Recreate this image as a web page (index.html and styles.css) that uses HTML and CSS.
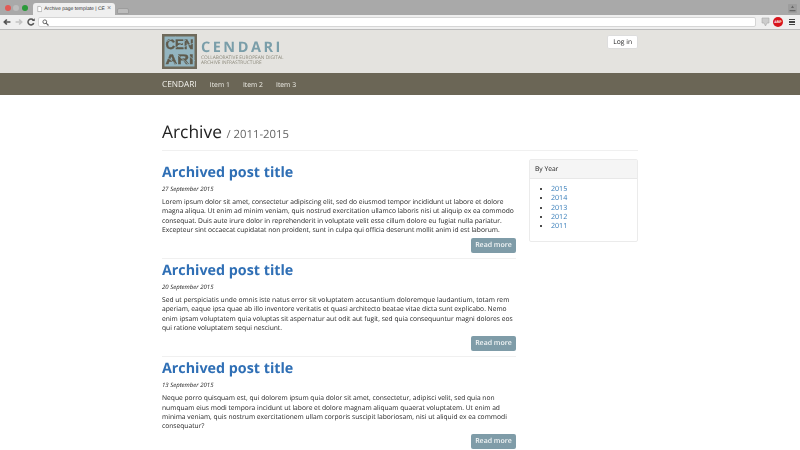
FILE: index.html
```html
<!DOCTYPE html>
<html lang="en">
<head>
<meta charset="utf-8">
<title>Archive page template</title>
<link rel="stylesheet" href="styles.css">
</head>
<body>
<div class="tabstrip">
  <div class="lights"><i class="light red"></i><i class="light grey"></i><i class="light green"></i></div>
  <div class="tab">
    <svg class="tab-doc" width="7" height="8" viewBox="0 0 7 8"><path d="M1 .5h3.500L6.500 2.500V7.500H1z" fill="#fff" stroke="#888" stroke-width=".7"/></svg>
    <span class="tab-title">Archive page template | CE</span>
    <span class="tab-close">×</span>
  </div>
  <div class="newtab"></div>
  <div class="strip-space"></div>
  <div class="profile"><svg width="7" height="7" viewBox="0 0 7 7"><path d="M3.500 .5 5 3H2zM.5 5h6v1.200h-6z" fill="#666"/></svg></div>
</div>
<div class="toolbar">
  <svg class="nav-icon" width="10" height="10" viewBox="-2 -2 14 14"><path d="M.8 5h9M4.800 1.500 1.300 5 4.800 8.500" fill="none" stroke="#555" stroke-width="2.400"/></svg>
  <svg class="nav-icon" width="10" height="10" viewBox="-2 -2 14 14"><path d="M.2 5h9M5.200 1.500 8.700 5 5.200 8.500" fill="none" stroke="#c4c4c4" stroke-width="2.400"/></svg>
  <svg class="nav-icon" width="10" height="10" viewBox="-1 -1 12 12"><path d="M8.300 6.300A3.600 3.600 0 1 1 7.800 2.600" fill="none" stroke="#555" stroke-width="1.800"/><path d="M6 3.800h3.500V.4z" fill="#555"/></svg>
  <div class="omnibox"><svg width="7" height="7" viewBox="0 0 7 7"><circle cx="2.800" cy="2.800" r="1.900" fill="none" stroke="#666"/><path d="M4.200 4.200 6.500 6.500" stroke="#666" stroke-width="1.200"/></svg></div>
  <svg class="ext-tag" width="9" height="10" viewBox="0 0 9 10"><path d="M1 1h7v5H6L4.500 9 3 6H1z" fill="#ccc" stroke="#aaa" stroke-width=".6"/></svg>
  <span class="abp">ABP</span>
  <div class="burger"><i></i><i></i><i></i></div>
</div>

<header class="site-header">
  <div class="wrap header-row">
    <div class="brand">
      <svg class="brand-mark" width="35" height="35" viewBox="0 0 35 35">
        <rect width="35" height="35" fill="#6f6a5b"/>
        <rect x="2.500" y="2.500" width="30" height="30" fill="#93b5c0"/>
        <text class="logo-letters" x="3.500" y="15" textLength="28" lengthAdjust="spacingAndGlyphs">CEN</text>
        <text class="logo-letters" x="3.500" y="30" textLength="28" lengthAdjust="spacingAndGlyphs">ARI</text>
        <path d="M3 8 14 3M12 15 24 6M21 13 32 9M5 23 15 31M15 20 27 31M24 19 33 27" fill="none" stroke="#93b5c0" stroke-width=".8"/>
      </svg>
      <div class="brand-text">
        <div class="brand-name">CENDARI</div>
        <div class="brand-sub">COLLABORATIVE EUROPEAN DIGITAL<br>ARCHIVE INFRASTRUCTURE</div>
      </div>
    </div>
    <a class="login">Log in</a>
  </div>
</header>
<nav class="navbar">
  <div class="wrap nav-row">
    <a class="nav-brand">CENDARI</a>
    <a class="nav-item">Item 1</a>
    <a class="nav-item">Item 2</a>
    <a class="nav-item">Item 3</a>
  </div>
</nav>

<main class="wrap">
  <h1 class="page-title">Archive <small>/ 2011-2015</small></h1>
  <div class="columns">
    <div class="posts">
      <article class="post">
        <h2 class="post-title">Archived post title</h2>
        <p class="post-date">27 September 2015</p>
        <p class="post-body">Lorem ipsum dolor sit amet, consectetur adipiscing elit, sed do eiusmod tempor incididunt ut labore et dolore magna aliqua. Ut enim ad minim veniam, quis nostrud exercitation ullamco laboris nisi ut aliquip ex ea commodo consequat. Duis aute irure dolor in reprehenderit in voluptate velit esse cillum dolore eu fugiat nulla pariatur. Excepteur sint occaecat cupidatat non proident, sunt in culpa qui officia deserunt mollit anim id est laborum.</p>
        <div class="more-row"><a class="more">Read more</a></div>
      </article>
      <article class="post">
        <h2 class="post-title">Archived post title</h2>
        <p class="post-date">20 September 2015</p>
        <p class="post-body">Sed ut perspiciatis unde omnis iste natus error sit voluptatem accusantium doloremque laudantium, totam rem aperiam, eaque ipsa quae ab illo inventore veritatis et quasi architecto beatae vitae dicta sunt explicabo. Nemo enim ipsam voluptatem quia voluptas sit aspernatur aut odit aut fugit, sed quia consequuntur magni dolores eos qui ratione voluptatem sequi nesciunt.</p>
        <div class="more-row"><a class="more">Read more</a></div>
      </article>
      <article class="post">
        <h2 class="post-title">Archived post title</h2>
        <p class="post-date">13 September 2015</p>
        <p class="post-body">Neque porro quisquam est, qui dolorem ipsum quia dolor sit amet, consectetur, adipisci velit, sed quia non numquam eius modi tempora incidunt ut labore et dolore magnam aliquam quaerat voluptatem. Ut enim ad minima veniam, quis nostrum exercitationem ullam corporis suscipit laboriosam, nisi ut aliquid ex ea commodi consequatur?</p>
        <div class="more-row"><a class="more">Read more</a></div>
      </article>
    </div>
    <aside class="panel">
      <div class="panel-head">By Year</div>
      <ul class="years">
        <li><a>2015</a></li>
        <li><a>2014</a></li>
        <li><a>2013</a></li>
        <li><a>2012</a></li>
        <li><a>2011</a></li>
      </ul>
    </aside>
  </div>
</main>
</body>
</html>
```
FILE: styles.css
```css
* { box-sizing: border-box; }
html, body { margin: 0; height: 450px; overflow: hidden; background: #fff; }
body { font-family: "Open Sans", sans-serif; color: #333; text-rendering: geometricPrecision; }

.tabstrip { display: flex; align-items: flex-end; height: 15px; background: #a9a9a9; }
.lights { display: flex; gap: 2.500px; align-self: flex-start; margin: 5px 0 0 4.500px; width: 28.500px; }
.light { width: 6px; height: 6px; border-radius: 50%; }
.red { background: #e25a55; }
.grey { background: #bdbdbd; }
.green { background: #2a9a3a; }
.tab { display: flex; align-items: center; gap: 2px; width: 82px; height: 12px; padding: 0 4px; background: #efefef; border-radius: 3px 3px 0 0; }
.tab-title { flex: 1; font: 5px/12px "Liberation Sans", sans-serif; color: #333; white-space: nowrap; }
.tab-close { font: 7px/12px "Liberation Sans", sans-serif; color: #777; }
.newtab { width: 12px; height: 6px; margin: 0 0 1px 2px; background: #bcbcbc; border: 1px solid #9d9d9d; border-radius: 2px 2px 0 0; }
.strip-space { flex: 1; }
.profile { display: flex; align-items: center; justify-content: center; align-self: flex-start; width: 9px; height: 9px; margin: 4px 3px 0 0; background: #9d9d9d; border-radius: 1px; }

.toolbar { display: flex; align-items: center; gap: 2px; height: 15px; padding: 0 5px 0 2px; background: #efefef; border-bottom: 1px solid #bbb; }
.nav-icon { flex: none; }
.omnibox { display: flex; align-items: center; flex: 1; height: 10px; margin: 0 3px 0 0; padding-left: 3px; background: #fff; border: 1px solid #d5d5d5; border-radius: 2px; }
.ext-tag { flex: none; margin-right: 1px; }
.abp { width: 10px; height: 10px; border-radius: 50%; background: #d8141c; color: #fff; font: bold 3.500px/10px "Liberation Sans", sans-serif; text-align: center; }
.burger { display: flex; flex-direction: column; gap: 1px; width: 6px; margin-left: 4px; }
.burger i { height: 1.500px; background: #444; }

.wrap { width: 476px; margin: 0 auto; will-change: transform; }
.site-header { height: 43px; background: #e4e3df; }
.header-row { display: flex; justify-content: space-between; align-items: flex-start; padding-top: 4px; }
.brand { display: flex; gap: 4px; }
.brand-mark { flex: none; }
.logo-letters { font: bold 14px "Liberation Sans", sans-serif; fill: #5f5b4d; stroke: #5f5b4d; stroke-width: .4px; }
.brand-text { padding-top: 6.500px; }
.brand-name { font: 700 14.500px/14px "Open Sans", sans-serif; letter-spacing: 2.500px; color: #7a9ea9; }
.brand-sub { margin-top: 1.500px; font: 4.800px/5.200px "Open Sans", sans-serif; color: #8d8a7c; white-space: nowrap; }
.login { margin-top: 1px; padding: 0 5px; height: 14px; font-size: 6.700px; line-height: 12px; color: #222; background: #fff; border: 1px solid #ddd; border-radius: 2px; }

.navbar { height: 22px; background: #6b6656; }
.nav-row { display: flex; align-items: center; height: 22px; gap: 13px; }
.nav-brand { font-size: 8.300px; color: #f0efe9; }
.nav-item { font-size: 6.800px; color: #eeede6; }

.page-title { margin: 25px 0 0; padding-bottom: 3px; font-size: 17.400px; line-height: 24px; font-weight: 400; color: #222; border-bottom: 1px solid #f0f0f0; }
.page-title small { font-size: 11.300px; color: #666; }

.columns { display: flex; justify-content: space-between; align-items: flex-start; margin-top: 8px; }
.posts { width: 354px; padding-top: 4px; }
.post { padding-bottom: 5.200px; border-bottom: 1px solid #f0f0f0; margin-bottom: 2px; }
.post:last-child { border-bottom: 0; }
.post-title { margin: 0; font-size: 14.300px; line-height: 20px; font-weight: 700; color: #2f6fb5; }
.post-date { margin: 2px 0 0; font-size: 6px; line-height: 9px; font-style: italic; color: #222; }
.post-body { margin: 3px 0 0; font-size: 6.700px; line-height: 9.250px; color: #222; }
.more-row { display: flex; justify-content: flex-end; margin-top: 4px; }
.more { width: 45px; height: 15px; font-size: 7px; font-weight: 600; line-height: 15px; text-align: center; color: #f2f5f6; background: #7f9ca8; border-radius: 2px; }

.panel { width: 109px; border: 1px solid #ebebeb; border-radius: 2px; }
.panel-head { height: 19px; padding-left: 5px; font-size: 6.700px; line-height: 18px; color: #222; background: #f5f5f5; border-bottom: 1px solid #e8e8e8; }
.years { margin: 0; padding: 6px 0 10px 21px; font-size: 7.100px; line-height: 9.250px; color: #111; }
.years a { color: #337ab7; }
```
